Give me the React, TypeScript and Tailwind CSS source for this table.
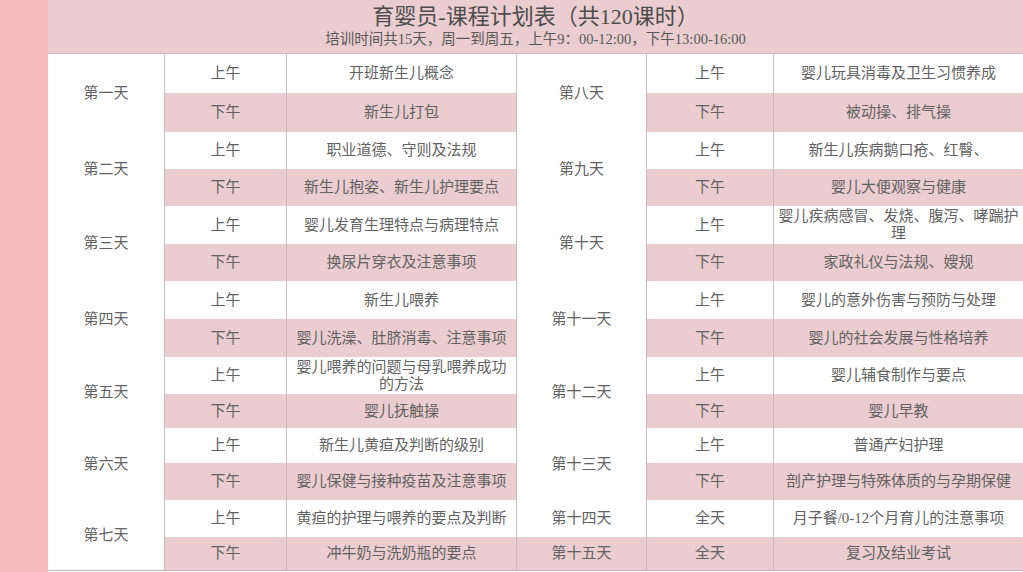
import React from "react";

interface Slot {
  period: string;
  content: string;
}

interface Day {
  name: string;
  slots: Slot[];
}

const leftDays: Day[] = [
  { name: "第一天", slots: [{ period: "上午", content: "开班新生儿概念" }, { period: "下午", content: "新生儿打包" }] },
  { name: "第二天", slots: [{ period: "上午", content: "职业道德、守则及法规" }, { period: "下午", content: "新生儿抱姿、新生儿护理要点" }] },
  { name: "第三天", slots: [{ period: "上午", content: "婴儿发育生理特点与病理特点" }, { period: "下午", content: "换尿片穿衣及注意事项" }] },
  { name: "第四天", slots: [{ period: "上午", content: "新生儿喂养" }, { period: "下午", content: "婴儿洗澡、肚脐消毒、注意事项" }] },
  { name: "第五天", slots: [{ period: "上午", content: "婴儿喂养的问题与母乳喂养成功的方法" }, { period: "下午", content: "婴儿抚触操" }] },
  { name: "第六天", slots: [{ period: "上午", content: "新生儿黄疸及判断的级别" }, { period: "下午", content: "婴儿保健与接种疫苗及注意事项" }] },
  { name: "第七天", slots: [{ period: "上午", content: "黄疸的护理与喂养的要点及判断" }, { period: "下午", content: "冲牛奶与洗奶瓶的要点" }] },
];

const rightDays: Day[] = [
  { name: "第八天", slots: [{ period: "上午", content: "婴儿玩具消毒及卫生习惯养成" }, { period: "下午", content: "被动操、排气操" }] },
  { name: "第九天", slots: [{ period: "上午", content: "新生儿疾病鹅口疮、红臀、" }, { period: "下午", content: "婴儿大便观察与健康" }] },
  { name: "第十天", slots: [{ period: "上午", content: "婴儿疾病感冒、发烧、腹泻、哮踹护理" }, { period: "下午", content: "家政礼仪与法规、嫂规" }] },
  { name: "第十一天", slots: [{ period: "上午", content: "婴儿的意外伤害与预防与处理" }, { period: "下午", content: "婴儿的社会发展与性格培养" }] },
  { name: "第十二天", slots: [{ period: "上午", content: "婴儿辅食制作与要点" }, { period: "下午", content: "婴儿早教" }] },
  { name: "第十三天", slots: [{ period: "上午", content: "普通产妇护理" }, { period: "下午", content: "剖产护理与特殊体质的与孕期保健" }] },
  { name: "第十四天", slots: [{ period: "全天", content: "月子餐/0-12个月育儿的注意事项" }] },
  { name: "第十五天", slots: [{ period: "全天", content: "复习及结业考试" }] },
];

const line = "border-l border-[#cdb9bd]";
const pink = "bg-[#eaccd1]";

interface FlatRow {
  day: Day;
  slot: Slot;
  first: boolean;
  two: boolean;
  isPink: boolean;
}

// one entry per table row, so both halves line up row by row
function flatten(days: Day[]): FlatRow[] {
  const out: FlatRow[] = [];
  days.forEach((day) => {
    day.slots.forEach((slot, i) => {
      out.push({ day, slot, first: i === 0, two: day.slots.length === 2, isPink: out.length % 2 === 1 });
    });
  });
  return out;
}

function Cell({ children, className = "" }: { children: React.ReactNode; className?: string }) {
  return (
    <div className={`flex items-center justify-center text-center px-[4px] leading-[17px] ${className}`}>
      {children}
    </div>
  );
}

export default function App() {
  const left = flatten(leftDays);
  const right = flatten(rightDays);

  const nodes: React.ReactNode[] = [];
  for (let r = 0; r < 14; r++) {
    const l = left[r];
    const bgL = l.isPink ? pink : "bg-white";
    if (l.first) {
      nodes.push(
        <Cell key={`ld${r}`} className={l.two ? "row-span-2 bg-white" : "bg-white"}>
          {l.day.name}
        </Cell>
      );
    }
    nodes.push(<Cell key={`lp${r}`} className={`${line} ${bgL}`}>{l.slot.period}</Cell>);
    nodes.push(<Cell key={`lc${r}`} className={`${line} ${bgL}`}>{l.slot.content}</Cell>);

    const rt = right[r];
    const bgR = rt.isPink ? pink : "bg-white";
    if (rt.first) {
      const dayPink = !rt.two && rt.isPink;
      nodes.push(
        <Cell key={`rd${r}`} className={`${line} ${rt.two ? "row-span-2" : ""} ${dayPink ? pink : "bg-white"}`}>
          {rt.day.name}
        </Cell>
      );
    }
    nodes.push(<Cell key={`rp${r}`} className={`${line} ${bgR}`}>{rt.slot.period}</Cell>);
    nodes.push(<Cell key={`rc${r}`} className={`${line} ${bgR} px-[2px]`}>{rt.slot.content}</Cell>);
  }

  return (
    <div
      className="flex w-[1023px] h-[572px] overflow-hidden bg-white text-[#626262]"
      style={{ fontFamily: '"Liberation Serif", "Noto Sans CJK SC", serif' }}
    >
      <div className="w-[48px] shrink-0 bg-[#f6baba]" />
      <div className="flex flex-1 flex-col">
        {/* Header */}
        <div className="flex h-[54px] shrink-0 flex-col items-center justify-center border-b border-[#d4b6bb] bg-[#eaccd1] pb-[1px]">
          <div className="text-[22px] leading-[26px] text-[#4d4d4d]">育婴员-课程计划表（共120课时）</div>
          <div className="text-[14.5px] leading-[18px] text-[#595959]">
            培训时间共15天，周一到周五，上午9：00-12:00，下午13:00-16:00
          </div>
        </div>

        {/* Table */}
        <div className="grid grid-cols-[116px_122px_230px_130px_127px_250px] grid-rows-[39px_39px_37px_37px_38px_37px_38px_38px_37px_34px_35px_37px_37px_33px] border-b border-[#bfb3b5] text-[15px]">
          {nodes}
        </div>
      </div>
    </div>
  );
}
